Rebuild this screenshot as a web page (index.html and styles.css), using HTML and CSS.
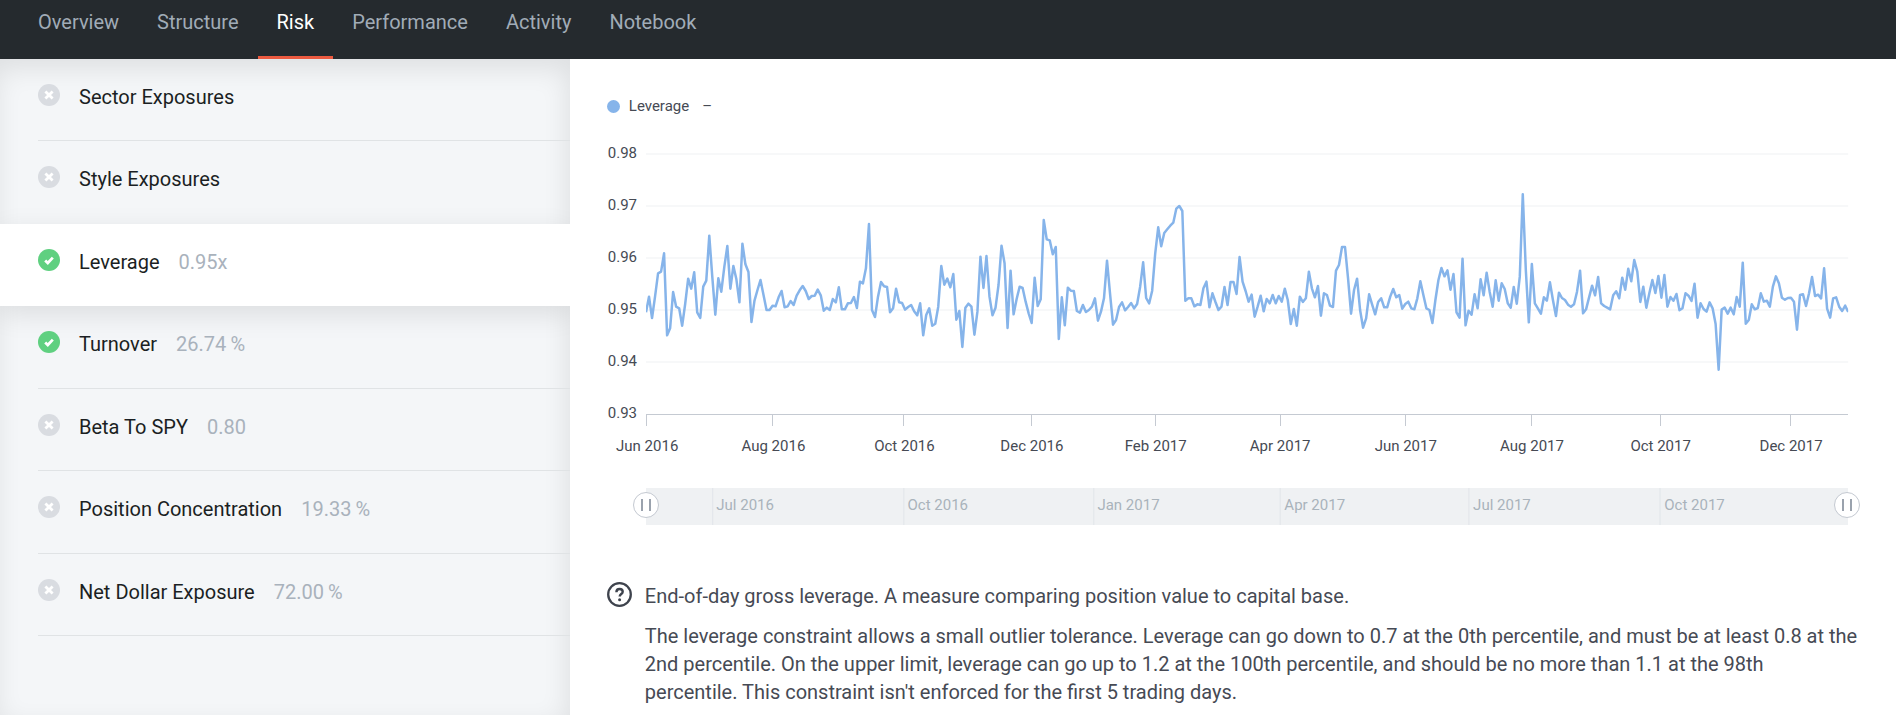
FILE: index.html
```html
<!DOCTYPE html>
<html lang="en">
<head>
<meta charset="utf-8">
<title>Risk – Leverage</title>
<link rel="stylesheet" href="styles.css">
</head>
<body>
<svg class="symbols" aria-hidden="true">
  <symbol id="fail" viewBox="0 0 22 22"><circle cx="11" cy="11" r="11" fill="#d9dce1"/><path d="M7.4 7.4l7.2 7.2M14.6 7.4l-7.2 7.2" stroke="#fff" stroke-width="2.8"/></symbol>
  <symbol id="pass" viewBox="0 0 22 22"><circle cx="11" cy="11" r="11" fill="#5fd080"/><path d="M7.2 11.4l2.6 2.5 5-5.3" fill="none" stroke="#fff" stroke-width="2.8"/></symbol>
</svg>
<nav class="tabs">
  <a class="tab" href="#overview">Overview</a>
  <a class="tab" href="#structure">Structure</a>
  <a class="tab tab-active" href="#risk" aria-current="page">Risk</a>
  <a class="tab" href="#performance">Performance</a>
  <a class="tab" href="#activity">Activity</a>
  <a class="tab" href="#notebook">Notebook</a>
</nav>
<div class="page">
  <aside class="sidebar">
    <ul class="checks">
      <li><a class="check" href="#sector"><svg class="status"><use href="#fail"/></svg><span>Sector Exposures</span></a></li>
      <li><a class="check" href="#style"><svg class="status"><use href="#fail"/></svg><span>Style Exposures</span></a></li>
      <li class="selected"><a class="check" href="#leverage"><svg class="status"><use href="#pass"/></svg><span>Leverage</span><span class="value">0.95x</span></a></li>
      <li><a class="check" href="#turnover"><svg class="status"><use href="#pass"/></svg><span>Turnover</span><span class="value">26.74&thinsp;%</span></a></li>
      <li><a class="check" href="#beta"><svg class="status"><use href="#fail"/></svg><span>Beta To SPY</span><span class="value">0.80</span></a></li>
      <li><a class="check" href="#position"><svg class="status"><use href="#fail"/></svg><span>Position Concentration</span><span class="value">19.33&thinsp;%</span></a></li>
      <li><a class="check" href="#net"><svg class="status"><use href="#fail"/></svg><span>Net Dollar Exposure</span><span class="value">72.00&thinsp;%</span></a></li>
    </ul>
  </aside>
  <main class="content">
    <div class="legend"><span class="dot"></span><span>Leverage</span><span class="reading">–</span></div>
    <svg class="chart" role="img" aria-label="Leverage over time">
      <g class="grid">
        <line x1="0" x2="100%" y1="0" y2="0"/><line x1="0" x2="100%" y1="52" y2="52"/><line x1="0" x2="100%" y1="104" y2="104"/><line x1="0" x2="100%" y1="156" y2="156"/><line x1="0" x2="100%" y1="208" y2="208"/>
      </g>
      <g class="axis">
        <line x1="0" x2="100%" y1="260" y2="260"/>
        <line x1="0" x2="0" y1="260" y2="272"/><line x1="10.5%" x2="10.5%" y1="260" y2="272"/><line x1="21.45%" x2="21.45%" y1="260" y2="272"/><line x1="32.05%" x2="32.05%" y1="260" y2="272"/><line x1="42.4%" x2="42.4%" y1="260" y2="272"/><line x1="52.75%" x2="52.75%" y1="260" y2="272"/><line x1="63.15%" x2="63.15%" y1="260" y2="272"/><line x1="73.65%" x2="73.65%" y1="260" y2="272"/><line x1="84.35%" x2="84.35%" y1="260" y2="272"/><line x1="95.2%" x2="95.2%" y1="260" y2="272"/>
      </g>
      <g class="ylabels">
        <text x="-9" y="4">0.98</text><text x="-9" y="56">0.97</text><text x="-9" y="108">0.96</text><text x="-9" y="160">0.95</text><text x="-9" y="212">0.94</text><text x="-9" y="264">0.93</text>
      </g>
      <g class="xlabels">
        <text x="0.1%" y="297">Jun 2016</text><text x="10.6%" y="297">Aug 2016</text><text x="21.5%" y="297">Oct 2016</text><text x="32.1%" y="297">Dec 2016</text><text x="42.4%" y="297">Feb 2017</text><text x="52.75%" y="297">Apr 2017</text><text x="63.2%" y="297">Jun 2017</text><text x="73.7%" y="297">Aug 2017</text><text x="84.4%" y="297">Oct 2017</text><text x="95.25%" y="297">Dec 2017</text>
      </g>
      <svg width="100%" height="260" viewBox="0 42 3606 780" preserveAspectRatio="none"><polyline id="series" stroke-width="2.5"/></svg>
    </svg>
    <div class="navigator">
      <svg class="periods">
        <line x1="5.55%" x2="5.55%" y1="0" y2="100%"/><line x1="21.45%" x2="21.45%" y1="0" y2="100%"/><line x1="37.25%" x2="37.25%" y1="0" y2="100%"/><line x1="52.75%" x2="52.75%" y1="0" y2="100%"/><line x1="68.45%" x2="68.45%" y1="0" y2="100%"/><line x1="84.35%" x2="84.35%" y1="0" y2="100%"/>
        <text x="5.85%" y="22">Jul 2016</text><text x="21.75%" y="22">Oct 2016</text><text x="37.55%" y="22">Jan 2017</text><text x="53.1%" y="22">Apr 2017</text><text x="68.8%" y="22">Jul 2017</text><text x="84.7%" y="22">Oct 2017</text>
      </svg>
      <button class="handle handle-start" aria-label="Range start"></button>
      <button class="handle handle-end" aria-label="Range end"></button>
    </div>
    <section class="info">
      <svg class="help" viewBox="0 0 25 25" aria-hidden="true"><circle cx="12.5" cy="12.5" r="11.3" fill="none" stroke="#3e434d" stroke-width="2.3"/><path d="M9.4 10.2C9.4 8.2 10.7 7 12.6 7c1.9 0 3.1 1.1 3.1 2.7 0 2.4-3 2.3-3 4.9" fill="none" stroke="#3e434d" stroke-width="2.4"/><circle cx="12.6" cy="17.8" r="1.5" fill="#3e434d"/></svg>
      <div class="copy">
        <p>End-of-day gross leverage. A measure comparing position value to capital base.</p>
        <p>The leverage constraint allows a small outlier tolerance. Leverage can go down to 0.7 at the 0th percentile, and must be at least 0.8 at the 2nd percentile. On the upper limit, leverage can go up to 1.2 at the 100th percentile, and should be no more than 1.1 at the 98th<br> percentile. This constraint isn't enforced for the first 5 trading days.</p>
      </div>
    </section>
  </main>
</div>
<script src="chart.js"></script>
</body>
</html>
```
FILE: styles.css
```css
* { box-sizing: border-box; }
body {
  margin: 0;
  min-height: 100vh;
  display: flex;
  flex-direction: column;
  font-family: Roboto, "Liberation Sans", sans-serif;
  font-size: 20px;
  line-height: 28px;
  color: #464a54;
  background: #fff;
}
a { color: inherit; text-decoration: none; }
.symbols { display: none; }

.tabs { display: flex; padding: 0 19px; background: #252a2e; color: #a1acb7; }
.tab { padding: 8px 19px 20px; border-bottom: 3px solid transparent; }
.tab-active { color: #fff; border-bottom-color: #ec5a40; }

.page { flex: 1; display: flex; }
.sidebar {
  flex: 0 0 calc(30% + 1px);
  overflow: hidden;
  background: #f4f6f8;
  box-shadow: inset -3px 10px 26px rgba(0, 0, 0, 0.09);
}
.checks { display: grid; grid-auto-rows: 1fr; height: 577px; margin: 0; padding: 0; list-style: none; color: #1b1f23; }
.checks li { padding-left: 38px; }
.check { display: flex; height: 100%; gap: 19px; padding-top: 24px; border-bottom: 1px solid #e0e3e5; }
.selected { background: #fff; box-shadow: 0 8px 26px rgba(0, 0, 0, 0.1); }
.selected .check, li:has(+ .selected) .check { border-color: transparent; }
.status { width: 22px; height: 22px; margin-top: 1px; }
.value { color: #a9b2bc; }

.content { flex: 1; min-width: 0; padding: 33px 48px 8px 37px; }
.legend { display: flex; align-items: center; gap: 9px; font-size: 15px; margin-bottom: 34px; }
.dot { width: 13px; height: 13px; border-radius: 50%; background: #86b4ea; }
.reading { margin-left: 4px; }
.chart { display: block; width: calc(100% - 39px); height: 334px; margin-left: 39px; overflow: visible; font-size: 15px; fill: #464a54; }
.grid line { stroke: #f7f8f9; stroke-width: 2; }
.axis line { stroke: #c5cad2; stroke-width: 1; shape-rendering: crispEdges; }
.ylabels { text-anchor: end; }
.xlabels { text-anchor: middle; }
#series { fill: none; stroke: #86b4ea; stroke-linejoin: round; vector-effect: non-scaling-stroke; }

.navigator { position: relative; height: 37px; margin-left: 39px; background: #eff1f3; }
.periods { display: block; width: 100%; height: 100%; font-size: 15px; fill: #a9b3bb; }
.periods line { stroke: #e1e5e9; }
.handle {
  position: absolute;
  top: 4px;
  width: 26px;
  height: 26px;
  padding: 0;
  display: grid;
  place-items: center;
  border: 1px solid #c4c9d1;
  border-radius: 50%;
  background: #fff;
}
.handle::before { content: ""; width: 6px; height: 12px; border: solid #9aa2ad; border-width: 0 2px; }
.handle-start { left: -13px; }
.handle-end { right: -12px; }

.info { display: flex; gap: 13px; margin: 57px -10px 0 0; }
.help { flex: none; width: 25px; height: 25px; }
.copy { display: grid; gap: 12px; }
.copy p { margin: 0; }
```
FILE: chart.js
```js
// Daily heights on a scale where 42 is 0.98 and 822 is 0.93.
const heights = [
  517, 470, 534, 470, 400, 395, 340, 586, 565, 456, 500, 505, 557, 492, 416, 446, 397, 517, 534, 440,
  422, 287, 410, 524, 415, 455, 380, 318, 446, 378, 418, 487, 311, 373, 396, 546, 482, 450, 420, 465,
  510, 510, 497, 499, 472, 453, 502, 499, 483, 495, 467, 451, 438, 453, 477, 468, 467, 449, 466, 512,
  503, 510, 477, 487, 442, 508, 508, 490, 489, 471, 504, 425, 430, 385, 252, 510, 531, 470, 426, 439,
  441, 517, 505, 446, 487,
  489, 509, 501, 495, 514, 526, 490, 586, 525, 505, 557, 551, 500, 378, 434, 416, 442, 402, 539, 513,
  621, 503, 491, 500, 584, 515, 350, 444, 348, 470, 526, 503, 435, 317, 370, 564, 392, 523, 478, 440,
  444, 485, 520, 549, 413, 498, 478, 240, 298, 301, 343, 321, 597, 472, 556, 443, 452, 453, 513, 518,
  495, 516, 510, 500, 475, 542, 515, 475, 362, 460, 554, 540, 501, 487, 511, 501, 489, 505, 492, 440,
  367, 474, 490, 452, 340, 262, 319, 279, 268, 257, 248, 206, 198, 213, 482, 475, 475, 499, 493, 495,
  445, 425, 502, 460, 486, 510, 500, 441, 495, 426, 426, 462, 351, 425, 453, 485, 464, 530, 500, 467,
  514, 477, 490, 465, 490, 468, 485, 446, 480, 552, 507, 557, 470, 486, 475, 395, 445, 472, 438, 527,
  460, 465, 497, 501, 392, 375, 321, 321, 415, 521, 450, 416, 510, 563, 535, 463, 494, 523, 486, 475,
  502, 502, 470, 447, 472, 465, 506, 492, 485, 505, 508, 475, 424, 465, 505, 510, 549, 480, 420, 384,
  409, 391, 449, 402, 517, 533, 356, 556, 512, 524, 463, 505, 418, 466, 398, 455, 500, 421, 482, 430,
  447, 490, 503, 441, 491, 410, 163, 390, 547, 372, 490, 505, 521, 472, 482, 427,
  480, 528, 458, 474, 480, 494, 500, 493, 455, 392, 520, 508, 472, 437, 466, 411, 490, 498, 503, 508,
  466, 454, 475, 413, 449, 386, 424, 360, 395, 486, 440, 503, 460, 420, 459, 408, 473, 405, 500, 471,
  482, 462, 511, 505, 460, 467, 483, 431, 533, 490, 507, 515, 487, 505, 552, 689, 509, 503, 521, 503,
  523, 471, 500, 368, 551, 540, 493, 508, 504, 460, 485, 482, 500, 440, 409, 430, 473, 479, 474, 473,
  485, 569, 465, 463, 498, 460, 411, 468, 464, 475, 385, 506, 533, 475, 472, 500, 513, 497, 516
];
const step = 3606 / (heights.length - 1);
document.getElementById("series").setAttribute(
  "points",
  heights.map((y, i) => `${(i * step).toFixed(1)},${y}`).join(" ")
);
```
